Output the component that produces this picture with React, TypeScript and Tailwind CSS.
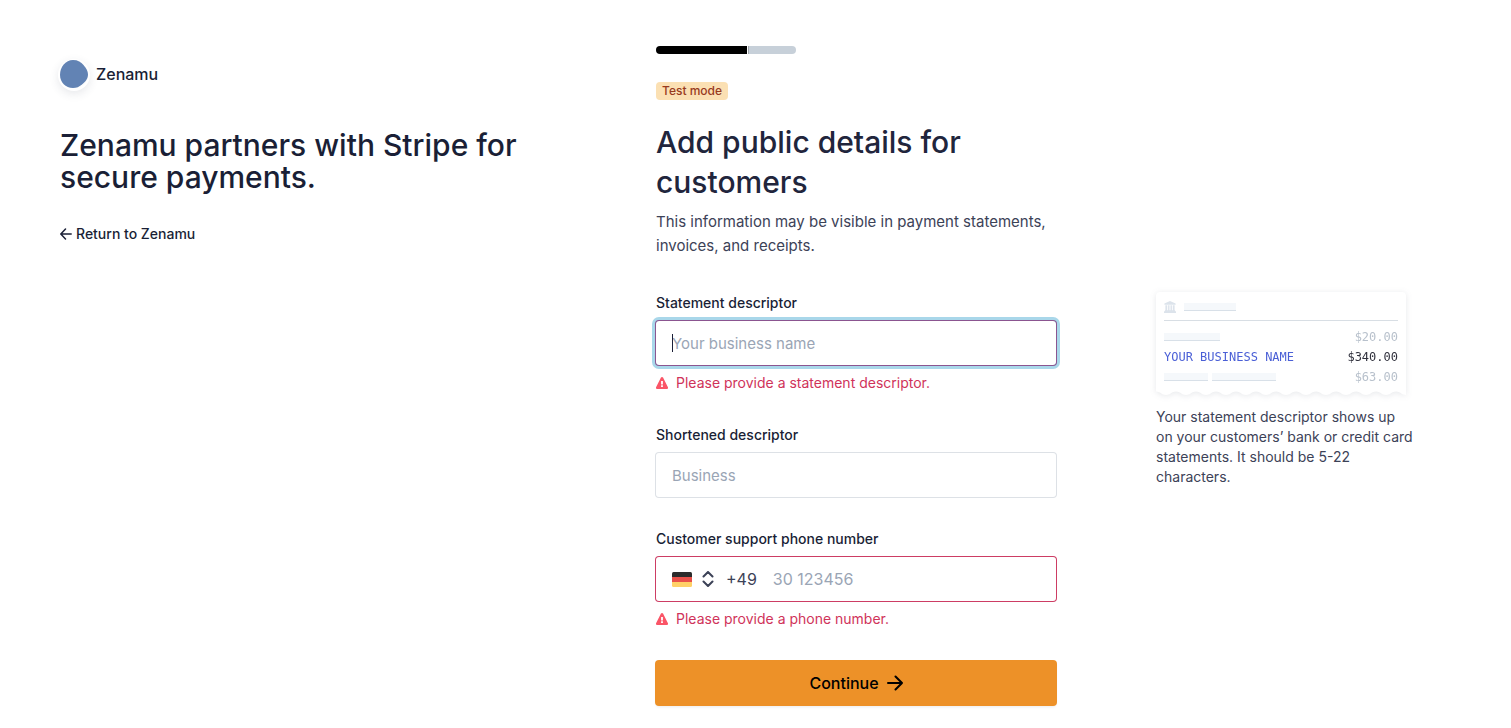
import type { ReactNode } from 'react';

function WarningIcon() {
  return (
    <svg viewBox="0 0 12 12" className="w-3 h-3 shrink-0" aria-hidden="true">
      <path
        d="M4.96.62a1.2 1.2 0 0 1 2.08 0l4.78 9.400A1.2 1.2 0 0 1 10.78 12H1.22a1.2 1.2 0 0 1-1.04-1.98z"
        fill="#fa5567"
      />
      <path d="M5.1 4h1.8v3.400H5.100zM5.1 8.300h1.8V10H5.100z" fill="#fff" />
    </svg>
  );
}

function FieldError({ id, children }: { id: string; children: ReactNode }) {
  return (
    <p id={id} className="mt-2 flex items-center gap-2 text-sm leading-5 text-[#d0335a]">
      <WarningIcon />
      {children}
    </p>
  );
}

function GermanFlag() {
  return (
    <svg viewBox="0 0 20 15" className="w-5 h-[15px]" aria-hidden="true">
      <clipPath id="flag">
        <rect width="20" height="15" rx="1.5" />
      </clipPath>
      <g clipPath="url(#flag)">
        <rect width="20" height="5" fill="#2b2b2b" />
        <rect y="5" width="20" height="5" fill="#e8504a" />
        <rect y="10" width="20" height="5" fill="#ffd167" />
      </g>
    </svg>
  );
}

function StatementPreview() {
  return (
    <div className="drop-shadow-[0_1px_3px_rgba(60,66,87,0.12)]">
      <div className="rounded-t bg-white px-2 pt-1">
        <div className="flex h-[25px] items-center gap-2 border-b border-[#d8dee4] pb-0.5">
          <svg viewBox="0 0 12 12" className="w-3 h-3" fill="#dce3eb" aria-hidden="true">
            <path d="M6 0l5.600 2.600v1.200H.4V2.600zM1.400 4.200h1.800v5H1.400zM4.100 4.200h1.400v5H4.100zM6.500 4.200h1.400v5H6.500zM8.800 4.200h1.800v5H8.800zM.9 9.200h10.200v1H.9zM0 10.200h12V12H0z" />
          </svg>
          <span className="h-2 w-[52px] border-b border-[#d8e0e8] bg-[#f5f8fb]" />
        </div>
        <div className="flex flex-col pt-1.5 font-['DejaVu_Sans_Mono',monospace] text-xs leading-5">
          <div className="flex items-center justify-between text-[#b8c1cc]">
            <span className="h-2 w-14 border-b border-[#d8e0e8] bg-[#f5f8fb]" />
            $20.00
          </div>
          <div className="flex items-center justify-between text-[#30313d]">
            <span className="text-[#4a5fd6]">YOUR BUSINESS NAME</span>
            $340.00
          </div>
          <div className="flex items-center justify-between text-[#b8c1cc]">
            <span className="flex gap-1">
              <span className="h-2 w-11 border-b border-[#d8e0e8] bg-[#f5f8fb]" />
              <span className="h-2 w-16 border-b border-[#d8e0e8] bg-[#f5f8fb]" />
            </span>
            $63.00
          </div>
        </div>
      </div>
      {/* Torn paper edge */}
      <svg viewBox="0 0 250 8" preserveAspectRatio="none" className="block w-full h-2" aria-hidden="true">
        <path
          d="M0 0V4.500C4 4.500 6 8 10 8S16 4.500 20 4.500S26 8 30 8S36 4.500 40 4.500S46 8 50 8S56 4.500 60 4.500S66 8 70 8S76 4.500 80 4.500S86 8 90 8S96 4.500 100 4.500S106 8 110 8S116 4.500 120 4.500S126 8 130 8S136 4.500 140 4.500S146 8 150 8S156 4.500 160 4.500S166 8 170 8S176 4.500 180 4.500S186 8 190 8S196 4.500 200 4.500S206 8 210 8S216 4.500 220 4.500S226 8 230 8S236 4.500 240 4.500S246 8 250 8V0z"
          fill="#fff"
        />
      </svg>
    </div>
  );
}

export default function App() {
  return (
    <div className="grid min-h-screen grid-cols-[1fr_400px_250px] gap-x-[100px] bg-white pl-[60px] pr-[105px] font-['Inter',sans-serif] text-[#1a1f36]">
      <aside className="pt-[60px]">
        <div className="flex items-center gap-2">
          <svg viewBox="0 0 28 28" className="w-7 h-7 overflow-visible rounded-full shadow-[0_1px_0_2px_#fff,0_4px_10px_2px_rgba(60,66,87,0.12)]" aria-hidden="true">
            <path
              d="M13 0C18 0 21 2 23.500 5C26 8 28 11 28 14.500C28 19 25 22 22 24.500C19 27 16.500 28 13 28C5.500 28 0 22 0 15C0 7 5.500 0 13 0z"
              fill="#6283b4"
            />
          </svg>
          <span className="font-medium">Zenamu</span>
        </div>
        <h2 className="mt-[41px] text-[30px] leading-8 font-medium">
          Zenamu partners with Stripe for secure payments.
        </h2>
        <a href="#" className="mt-[31px] inline-flex items-center gap-1 text-sm leading-5 font-medium">
          <svg viewBox="0 0 12 12" className="w-3 h-3" fill="none" stroke="currentColor" strokeWidth="1.5" strokeLinecap="round" strokeLinejoin="round" aria-hidden="true">
            <path d="M11.200 6H1M5.500 1L.8 6l4.700 5" />
          </svg>
          Return to Zenamu
        </a>
      </aside>

      <main className="pt-[46px] pb-[23px]">
        <div className="flex h-2 w-[140px] overflow-hidden rounded-full bg-white">
          <div className="w-[91px] bg-black" />
          <div className="ml-px flex-1 border-l border-[#a3a8ad] bg-[#c7d0d9]" />
        </div>
        <span className="mt-7 block w-fit rounded bg-[#fbe0b3] px-1.5 text-xs leading-[18px] font-medium text-[#983a1d]">
          Test mode
        </span>
        <h1 className="mt-[22px] text-[30px] leading-10 font-medium text-[#21253c]">
          Add public details for customers
        </h1>
        <p className="mt-2 text-[15px] leading-6 text-[#3c4257]">
          This information may be visible in payment statements, invoices, and receipts.
        </p>

        <form className="mt-[35px]" onSubmit={(e) => e.preventDefault()}>
          <label htmlFor="statement" className="block text-sm leading-5 font-medium">
            Statement descriptor
          </label>
          <div className="relative mt-2">
            <input
              id="statement"
              type="text"
              placeholder="Your business name"
              aria-describedby="statement-error"
              className="block h-11 w-full rounded-[3px] px-4 text-[15px] outline-none placeholder:text-[#9aa5b5] shadow-[0_0_0_1px_#8b5590,0_0_0_4px_#a9d7ea]"
            />
            {/* Caret */}
            <span className="absolute left-4 top-[13px] h-[18px] w-px bg-[#1a1f36]" />
          </div>
          <FieldError id="statement-error">Please provide a statement descriptor.</FieldError>

          <label htmlFor="shortened" className="mt-8 block text-sm leading-5 font-medium">
            Shortened descriptor
          </label>
          <input
            id="shortened"
            type="text"
            placeholder="Business"
            className="mt-2 block h-11 w-full rounded-[3px] px-4 text-[15px] outline-none placeholder:text-[#9aa5b5] shadow-[0_0_0_1px_#dde1e6]"
          />

          <label htmlFor="phone" className="mt-8 block text-sm leading-5 font-medium">
            Customer support phone number
          </label>
          <div className="mt-2 flex h-11 items-center rounded-[3px] px-4 shadow-[0_0_0_1px_#cd3d64]">
            <button type="button" aria-label="Country" className="flex items-center gap-2.5">
              <GermanFlag />
              <svg viewBox="0 0 12 16" className="w-3 h-4" fill="none" stroke="#3c4257" strokeWidth="2" strokeLinecap="round" strokeLinejoin="round" aria-hidden="true">
                <path d="M1.500 5.500L6 1l4.500 4.500M1.500 10.500L6 15l4.500-4.500" />
              </svg>
            </button>
            <span className="ml-3 text-[#3c4257]">+49</span>
            <input
              id="phone"
              type="tel"
              placeholder="30 123456"
              aria-describedby="phone-error"
              className="ml-4 min-w-0 flex-1 outline-none placeholder:text-[#9aa5b5]"
            />
          </div>
          <FieldError id="phone-error">Please provide a phone number.</FieldError>

          <button
            type="submit"
            className="mt-8 flex h-11 w-full items-center justify-center gap-2 rounded-[3px] bg-[#ed9128] font-medium text-black shadow-[0_0_0_1px_#ed9128,0_2px_3px_rgba(0,0,0,0.08)]"
          >
            Continue
            <svg viewBox="0 0 16 16" className="w-4 h-4" fill="none" stroke="currentColor" strokeWidth="2" strokeLinecap="round" strokeLinejoin="round" aria-hidden="true">
              <path d="M1 8h14M8.500 1.500L15 8l-6.500 6.500" />
            </svg>
          </button>
        </form>
      </main>

      <aside className="pt-[292px]">
        <StatementPreview />
        <p className="-mr-2 mt-3 text-sm leading-5 text-[#3c4257]">
          Your statement descriptor shows up on your customers’ bank or credit card statements. It should be 5-22
          characters.
        </p>
      </aside>
    </div>
  );
}
